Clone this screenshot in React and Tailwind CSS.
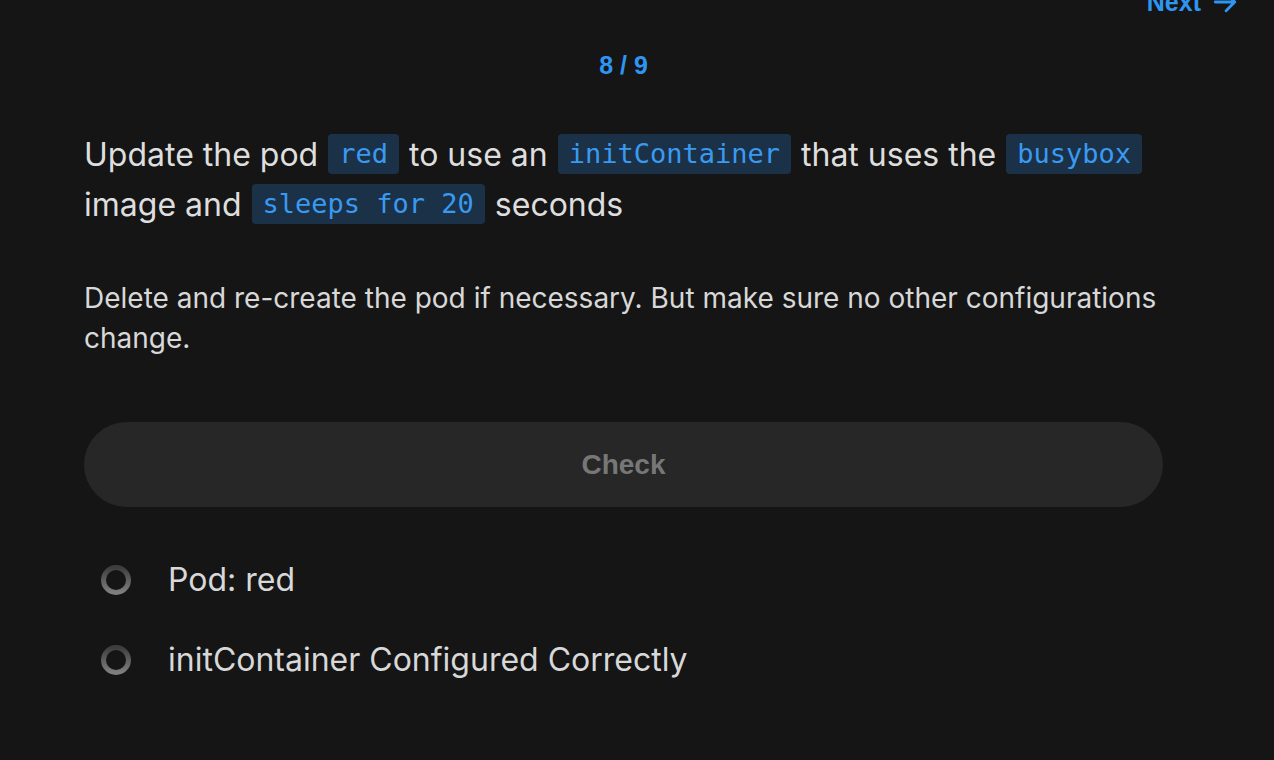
import React from "react";

const Code = ({ children }) => (
  <span className="inline-block rounded-[4px] bg-[#1b3148] mx-[1px] px-[11px] leading-[40px] text-[27px] text-[#3a9af0] align-middle [font-family:'DejaVu_Sans_Mono',monospace] relative top-[-3px]">
    {children}
  </span>
);

const Ring = () => (
  <svg width="32" height="32" viewBox="0 0 32 32">
    <defs>
      <linearGradient id="rg" x1="0" y1="0" x2="0" y2="1">
        <stop offset="0" stopColor="#3e3e3e" />
        <stop offset="1" stopColor="#7e7e7e" />
      </linearGradient>
    </defs>
    <circle cx="16" cy="16" r="12.5" fill="none" stroke="url(#rg)" strokeWidth="5" />
  </svg>
);

export default function App() {
  return (
    <div className="w-[1274px] h-[760px] overflow-hidden bg-[#151515] [font-family:Inter,sans-serif]">
      <div className="w-[1163px] pl-[84px]">
        <div className="flex justify-end -mt-[13px] -mr-[75px] items-center gap-[11px] text-[#2f95f3] [font-family:'Liberation_Sans',Arial,sans-serif] font-bold text-[25px] leading-[30px]">
          <span>Next</span>
          <svg width="26" height="26" viewBox="0 0 24 24" fill="none" stroke="#2f95f3" strokeWidth="2.6" strokeLinecap="round" strokeLinejoin="round">
            <path d="M3 12h18M13 4l8 8-8 8" />
          </svg>
        </div>
        <div className="mt-[33px] text-center text-[#2f95f3] [font-family:'Liberation_Sans',Arial,sans-serif] font-bold text-[25px] leading-[30px]">
          8 / 9
        </div>
        <p className="mt-[50px] text-[32px] leading-[50px] text-[#dedede]">
          Update the pod <Code>red</Code> to use an <Code>initContainer</Code> that uses the <Code>busybox</Code> image and{" "}
          <Code>sleeps for 20</Code> seconds
        </p>
        <p className="mt-[48px] text-[28px] leading-[40px] text-[#d8d8d8]">
          Delete and re-create the pod if necessary. But make sure no other configurations change.
        </p>
        <button className="mt-[64px] w-full h-[85px] rounded-full bg-[#272727] text-[#777777] [font-family:'Liberation_Sans',Arial,sans-serif] font-bold text-[28px]">
          Check
        </button>
        <div className="mt-[53px] flex flex-col gap-[40px]">
          <div className="flex items-center h-[40px]">
            <div className="w-[84px] pl-[16px]"><Ring /></div>
            <span className="text-[32px] text-[#d8d8d8]">Pod: red</span>
          </div>
          <div className="flex items-center h-[40px]">
            <div className="w-[84px] pl-[16px]"><Ring /></div>
            <span className="text-[32px] text-[#d8d8d8]">initContainer Configured Correctly</span>
          </div>
        </div>
      </div>
    </div>
  );
}
